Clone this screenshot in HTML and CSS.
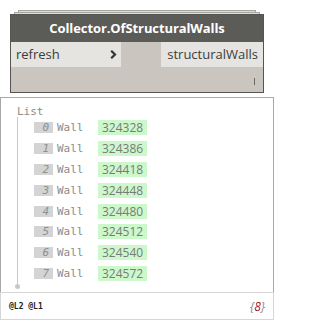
FILE: index.html
```html
<!DOCTYPE html>
<html lang="en">
<head>
  <meta charset="UTF-8" />
  <title>Collector.OfStructuralWalls</title>
  <link rel="stylesheet" href="styles.css">
</head>
<body>
  <div class="node-wrap">
    <div class="stack s1"></div>
    <div class="stack s2"></div>
    <div class="node">
      <div class="node-title">Collector.OfStructuralWalls</div>
      <div class="ports">
        <div class="port-in">
          <span>refresh</span>
          <svg class="chev" width="7" height="9" viewBox="0 0 7 9"><path d="M1.2 0.8 L5 4.5 L1.2 8.2" fill="none" stroke="#333" stroke-width="2.2"/></svg>
        </div>
        <div class="port-out">structuralWalls</div>
      </div>
      <div class="node-foot"><span class="grip"></span></div>
    </div>
  </div>

  <div class="preview">
    <div class="preview-main">
      <div class="list-label">List</div>
      <div class="items">
        <div class="row"><span class="idx">0</span><span class="type">Wall</span><span class="val">324328</span></div>
        <div class="row"><span class="idx">1</span><span class="type">Wall</span><span class="val">324386</span></div>
        <div class="row"><span class="idx">2</span><span class="type">Wall</span><span class="val">324418</span></div>
        <div class="row"><span class="idx">3</span><span class="type">Wall</span><span class="val">324448</span></div>
        <div class="row"><span class="idx">4</span><span class="type">Wall</span><span class="val">324480</span></div>
        <div class="row"><span class="idx">5</span><span class="type">Wall</span><span class="val">324512</span></div>
        <div class="row"><span class="idx">6</span><span class="type">Wall</span><span class="val">324540</span></div>
        <div class="row"><span class="idx">7</span><span class="type">Wall</span><span class="val">324572</span></div>
      </div>
      <div class="dot"></div>
    </div>
    <div class="preview-foot">
      <span class="levels">@L2 @L1</span>
      <span class="count">{<b>8</b>}</span>
    </div>
  </div>
</body>
</html>
```

FILE: styles.css
```css
body {
  margin: 0;
  background: #ffffff;
  font-family: 'Open Sans', sans-serif;
  color: #333;
}

.node-wrap {
  width: 254px;
  padding: 10px 0 0 10px;
}

.stack {
  height: 1px;
  border: 1px solid #a6a6a2;
  border-bottom: none;
  background: #dcdcd8;
}

.s1 {
  margin: 0 8px;
}

.s2 {
  margin: 0 4px;
}

.node {
  border: 1px solid #555552;
  background: #cac6bf;
}

.node-title {
  height: 27px;
  line-height: 27px;
  background: #5b5b58;
  color: #ffffff;
  font-weight: bold;
  font-size: 13px;
  text-align: center;
  letter-spacing: -0.1px;
}

.ports {
  display: flex;
  justify-content: space-between;
  height: 25px;
  line-height: 25px;
  font-size: 13px;
  color: #3c3c3c;
}

.port-in {
  width: 110px;
  padding-left: 5px;
  padding-right: 4px;
  box-sizing: border-box;
  background: #e5e4e0;
  display: flex;
  align-items: center;
  justify-content: space-between;
}

.port-out {
  width: 102px;
  background: #e5e4e0;
  text-align: right;
  padding-right: 5px;
  box-sizing: border-box;
}

.node-foot {
  height: 25px;
  display: flex;
  justify-content: flex-end;
  align-items: center;
  padding-right: 8px;
}

.grip {
  width: 1px;
  height: 7px;
  background: #6a6a6a;
  margin-top: 4px;
}

.preview {
  width: 274px;
  margin-top: 4px;
}

.preview-main {
  border: 1px solid #a8a8a8;
  border-bottom: none;
  height: 195px;
  padding-left: 16px;
  padding-top: 7px;
  box-sizing: border-box;
}

.list-label {
  font-family: 'DejaVu Sans Mono', monospace;
  font-size: 11px;
  color: #8c8c8c;
  line-height: 14px;
  height: 14px;
}

.items {
  border-left: 1px solid #c8c8c8;
  margin-top: -2px;
  padding-left: 16px;
}

.row {
  display: flex;
  align-items: center;
  height: 20.9px;
}

.idx {
  width: 19px;
  height: 11px;
  line-height: 11px;
  background: #d4d4d4;
  color: #909090;
  font-family: 'DejaVu Sans Mono', monospace;
  font-style: italic;
  font-size: 11px;
  text-align: right;
  padding-right: 4px;
  box-sizing: border-box;
}

.type {
  width: 41px;
  margin-left: 4px;
  font-family: 'DejaVu Sans Mono', monospace;
  font-size: 11px;
  color: #8c8c8c;
}

.val {
  width: 49px;
  height: 15px;
  line-height: 15px;
  background: #ccf8cc;
  color: #7a7a7a;
  font-size: 12px;
  padding-left: 4px;
  box-sizing: border-box;
}

.dot {
  width: 5px;
  height: 5px;
  border-radius: 50%;
  background: #c8c8c8;
  margin-left: -2px;
}

.preview-foot {
  height: 28px;
  border: 1px solid #d6d6d6;
  display: flex;
  align-items: center;
  justify-content: space-between;
  padding: 0 8px;
  box-sizing: border-box;
}

.levels {
  font-family: 'DejaVu Sans Mono', monospace;
  font-size: 8px;
  font-weight: bold;
  color: #222;
}

.count {
  font-size: 12px;
  font-style: italic;
  color: #888;
}

.count b {
  font-weight: normal;
  color: #a01818;
}
```
